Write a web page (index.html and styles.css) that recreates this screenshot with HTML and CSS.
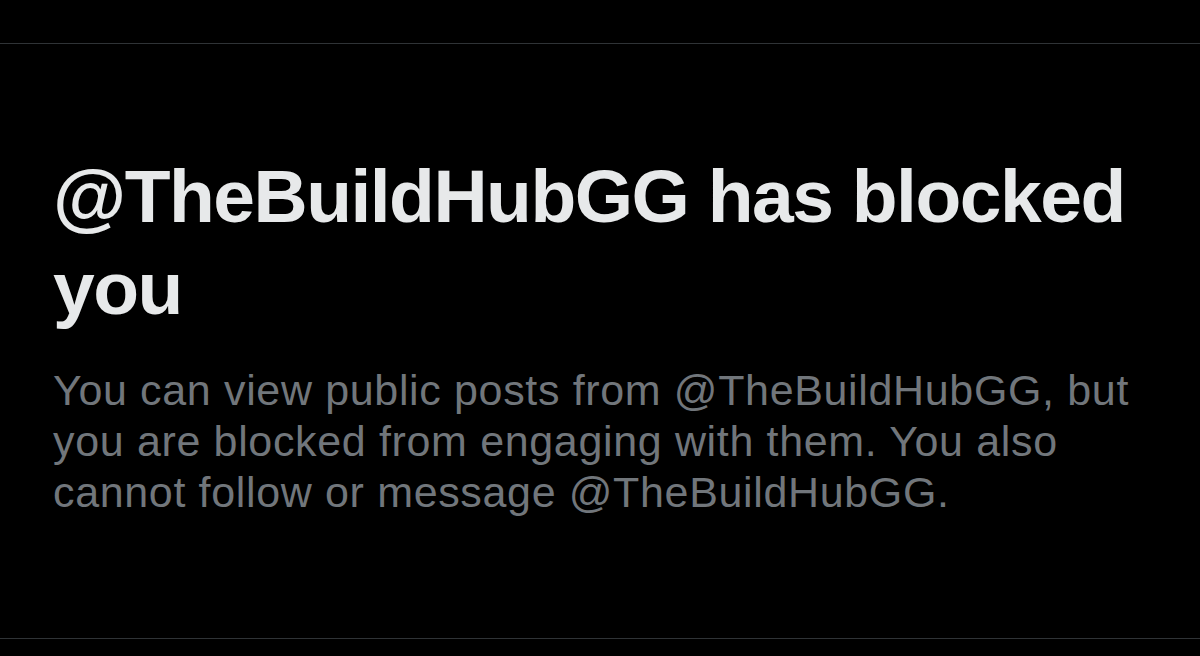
FILE: index.html
```html
<!DOCTYPE html>
<html lang="en">
<head>
    <meta charset="UTF-8">
    <meta name="viewport" content="width=device-width, initial-scale=1.0">
    <title>Blocked</title>
    <link rel="stylesheet" href="styles.css">
</head>
<body>

    <div class="topbar"></div>

    <div class="blocked">
        <h1>@TheBuildHubGG has blocked you</h1>
        <p>You can view public posts from @TheBuildHubGG, but you are blocked from engaging with them. You also cannot follow or message @TheBuildHubGG.</p>
    </div>

</body>
</html>
```

FILE: styles.css
```css
body {
    font-family: "Liberation Sans", Arial, sans-serif;
    background-color: #000;
    margin: 0;
    padding: 0;
}
.topbar {
    height: 43px;
    border-bottom: 1px solid #2f3336;
}
.blocked {
    box-sizing: border-box;
    height: 595px;
    padding: 106px 40px 0 53px;
    border-bottom: 1px solid #2f3336;
}
h1 {
    margin: 0;
    color: #e7e9ea;
    font-size: 75px;
    font-weight: bold;
    line-height: 92px;
    letter-spacing: -1.5px;
}
p {
    margin: 31px 0 0;
    color: #71767b;
    font-size: 43px;
    line-height: 51px;
    letter-spacing: 0.65px;
}
```
